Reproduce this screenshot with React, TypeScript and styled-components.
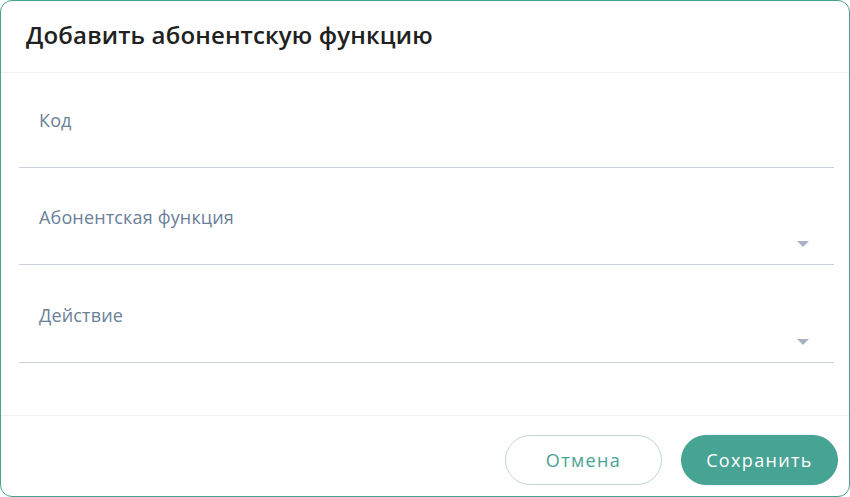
import React from "react";
import styled, { createGlobalStyle } from "styled-components";

const Global = createGlobalStyle`
  html, body { margin: 0; padding: 0; background: #ffffff; }
  body { font-family: "Open Sans", "Noto Sans", sans-serif; }
  * { box-sizing: border-box; }
`;

const Dialog = styled.div`
  width: 850px;
  height: 497px;
  border: 1px solid #46a393;
  border-radius: 12px;
  background: #ffffff;
  display: flex;
  flex-direction: column;
  overflow: hidden;
`;

const Header = styled.div`
  height: 72px;
  border-bottom: 1px solid #f0f0f0;
  display: flex;
  align-items: center;
  padding: 0 25px;
  flex-shrink: 0;
`;

const Title = styled.h2`
  margin: 0;
  font-size: 24px;
  font-weight: 600;
  color: #212121;
  letter-spacing: 0.15px;
  padding-bottom: 4px;
`;

const Body = styled.div`
  flex: 1;
  padding: 0 15px 0 18px;
  display: flex;
  flex-direction: column;
`;

const Field = styled.div<{ $h: number }>`
  height: ${(p) => p.$h}px;
  border-bottom: 1px solid #c9d0d8;
  position: relative;
  padding-left: 20px;
`;

const Label = styled.div<{ $top: number }>`
  padding-top: ${(p) => p.$top}px;
  font-size: 18px;
  color: #6a7f98;
  line-height: 24px;
  letter-spacing: 0.15px;
`;

const Arrow = styled.div`
  position: absolute;
  right: 25px;
  bottom: 17px;
  width: 0;
  height: 0;
  border-left: 6px solid transparent;
  border-right: 6px solid transparent;
  border-top: 6px solid #a7b2c2;
`;

const Footer = styled.div`
  height: 81px;
  border-top: 1px solid #f0f0f0;
  display: flex;
  justify-content: flex-end;
  align-items: flex-start;
  gap: 19px;
  padding: 19px 11px 0 0;
  flex-shrink: 0;
`;

const Button = styled.button<{ $primary?: boolean }>`
  width: 157px;
  height: 50px;
  border-radius: 25px;
  font-family: "Open Sans", "Noto Sans", sans-serif;
  font-size: 18px;
  letter-spacing: 1.35px;
  cursor: pointer;
  border: 1px solid ${(p) => (p.$primary ? "#47a393" : "#bcd5d4")};
  background: ${(p) => (p.$primary ? "#47a393" : "#ffffff")};
  color: ${(p) => (p.$primary ? "#ffffff" : "#47a393")};
  font-weight: 500;
`;

export default function App() {
  return (
    <>
      <Global />
      <Dialog>
        <Header>
          <Title>Добавить абонентскую функцию</Title>
        </Header>
        <Body>
          <Field $h={95}>
            <Label $top={35}>Код</Label>
          </Field>
          <Field $h={97}>
            <Label $top={37}>Абонентская функция</Label>
            <Arrow />
          </Field>
          <Field $h={98}>
            <Label $top={38}>Действие</Label>
            <Arrow />
          </Field>
        </Body>
        <Footer>
          <Button type="button">Отмена</Button>
          <Button type="button" $primary>
            Сохранить
          </Button>
        </Footer>
      </Dialog>
    </>
  );
}
